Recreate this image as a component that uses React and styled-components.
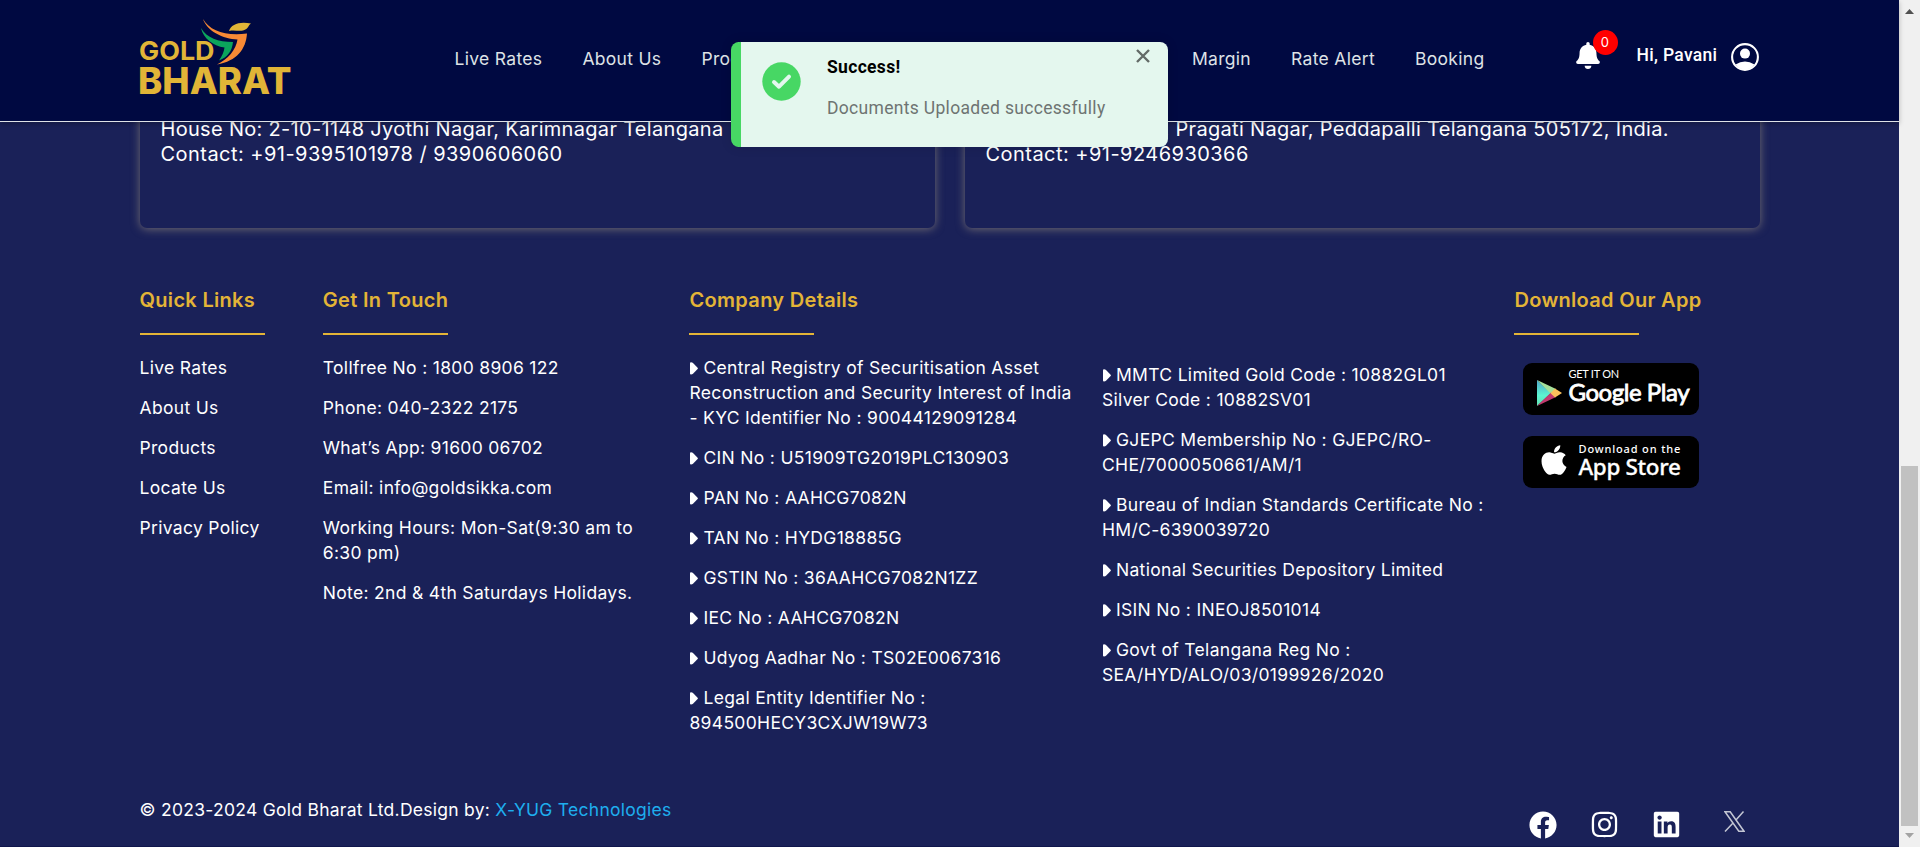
import React from "react";
import styled, { createGlobalStyle } from "styled-components";
import { FaFacebook, FaBell, FaApple } from "react-icons/fa";
import { FaInstagram, FaLinkedin } from "react-icons/fa6";

const Global = createGlobalStyle`
  *, *::before, *::after { box-sizing: border-box; }
  html, body { margin: 0; padding: 0; background: #1a2158; overflow: hidden; }
  body { font-family: Inter, "Liberation Sans", sans-serif; color: #fff; font-size: 17.5px; line-height: 25px; letter-spacing: 0.3125px; }
  p, h3, ul { margin: 0; padding: 0; }
  ul { list-style: none; }
  a { color: inherit; text-decoration: none; }
`;

const Shell = styled.div`
  display: flex;
  width: 1920px;
  height: 847px;
`;

const Page = styled.div`
  position: relative;
  flex: 1;
  display: flex;
  flex-direction: column;
  background: #1a2158;
  border-bottom: 1px solid #10164c;
`;

const Header = styled.header`
  position: relative;
  z-index: 2;
  flex: none;
  height: 122px;
  padding: 0 140.5px 0 139.5px;
  display: flex;
  align-items: flex-start;
  background: #000941;
  border-bottom: 1px solid #dee2e6;
  box-shadow: 0 2px 5px rgba(0, 0, 0, 0.25);
`;

const Logo = styled.svg`
  display: block;
  flex: none;
  width: 151px;
  height: 76px;
  margin: 18px 164px 0 0;
  letter-spacing: 0;
  overflow: visible;
`;

const Nav = styled.nav`
  display: flex;
  gap: 40px;
  width: 1030px;
  margin-top: 46px;
  color: #dee2e6;
`;

const NavLink = styled.a`
  white-space: nowrap;
  margin-left: ${(p) => (p.$push ? "auto" : "0")};
`;

const Account = styled.div`
  display: flex;
  margin-left: auto;
`;

const Bell = styled.div`
  position: relative;
  width: 24px;
  height: 27px;
  margin: 42px 37px 0 0;
  svg { display: block; width: 24px; height: 27px; }
`;

const Badge = styled.span`
  position: absolute;
  left: 17px;
  top: -12px;
  width: 25px;
  height: 25px;
  border-radius: 50%;
  background: #f00;
  font-size: 13px;
  line-height: 25px;
  text-align: center;
`;

const Greeting = styled.span`
  width: 80px;
  margin-top: 43px;
  font-family: Roboto, sans-serif;
  font-weight: 500;
  white-space: nowrap;
`;

const Avatar = styled.svg`
  display: block;
  width: 28px;
  height: 28px;
  margin: 43px 0 0 14px;
`;

const Toast = styled.div`
  position: absolute;
  z-index: 3;
  left: 731px;
  top: 42px;
  width: 437px;
  height: 105px;
  display: flex;
  background: #e4f7ee;
  border-left: 10px solid #47d764;
  border-radius: 8px;
  font-family: Roboto, sans-serif;
  box-shadow: 0 0 12px rgba(0, 0, 0, 0.12);
`;

const ToastIcon = styled.svg`
  display: block;
  width: 39px;
  height: 39px;
  margin: 20px 26.5px 0 20.5px;
`;

const ToastBody = styled.div`
  flex: 1;
  padding-top: 13px;
`;

const ToastTitle = styled.p`
  color: #000;
  font-size: 17.5px;
  font-weight: 700;
`;

const ToastText = styled.p`
  margin-top: 16px;
  color: #6e7472;
  font-size: 17.5px;
`;

const CloseIcon = styled.svg`
  display: block;
  width: 14px;
  height: 14px;
  margin: 7px 18px 0 0;
`;

const Offices = styled.section`
  flex: none;
  display: grid;
  grid-template-columns: 795px 795px;
  gap: 30px;
  padding: 0 139.5px;
  height: 106px;
`;

const Office = styled.article`
  margin-top: -22px;
  height: 128px;
  padding: 17px 21px 0;
  border-radius: 0 0 7px 7px;
  background: #1a2158;
  box-shadow: 0 1px 10px rgba(150, 140, 125, 0.7);
  font-size: 20px;
  line-height: 25px;
  white-space: nowrap;
`;

const Contact = styled.p`
  letter-spacing: 0.46px;
`;

const Footer = styled.footer`
  display: grid;
  grid-template-columns: 183.3px 366.7px 412.5px 412.5px 1fr;
  padding: 58px 109.5px 0 139.5px;
  height: 556px;
`;

const Column = styled.div`
  padding-right: 30px;
`;

const Heading = styled.h3`
  height: 47px;
  width: max-content;
  font-size: 20px;
  line-height: 28px;
  font-weight: 600;
  color: #e3b437;
`;

const Rule = styled.div`
  width: 125px;
  height: 2px;
  margin-left: ${(p) => p.$shift || 0}px;
  background: #e3b437;
`;

const Items = styled.ul`
  display: flex;
  flex-direction: column;
  gap: 15px;
  padding-top: ${(p) => p.$top || 20}px;
`;

const Item = styled.li`
  white-space: pre;
`;

const Caret = styled.svg`
  display: inline-block;
  width: 8px;
  height: 13px;
  margin: 0 5px 0 1px;
  vertical-align: -0.5px;
`;

const Stores = styled.div`
  display: flex;
  flex-direction: column;
  gap: 20.5px;
  padding: 28px 0 0 9px;
`;

const Store = styled.div`
  width: 176px;
  height: 52px;
  display: flex;
  border-radius: 9px;
  background: #000;
`;

const StoreIcon = styled.div`
  display: flex;
  width: ${(p) => p.$w}px;
  padding: ${(p) => p.$pad};
`;

const StoreText = styled.div`
  display: flex;
  flex-direction: column;
  white-space: nowrap;
`;

const StoreSmall = styled.span`
  font: ${(p) => p.$weight} ${(p) => p.$size}px/12px ${(p) => p.$family};
  letter-spacing: ${(p) => p.$spacing}px;
  margin-top: ${(p) => p.$top}px;
`;

const StoreBig = styled.span`
  font: ${(p) => p.$weight} ${(p) => p.$size}px/24px ${(p) => p.$family};
  letter-spacing: ${(p) => p.$spacing}px;
  -webkit-text-stroke: ${(p) => p.$stroke}px #fff;
`;

const Bottom = styled.div`
  display: flex;
  justify-content: space-between;
  padding: 13px 154px 0 139.5px;
`;

const Copyright = styled.p`
  letter-spacing: 0.27px;
`;

const Designer = styled.a`
  color: #1eaeee;
`;

const Socials = styled.div`
  display: flex;
  align-items: flex-start;
  padding-top: 13px;
`;

const Social = styled.a`
  display: flex;
  justify-content: center;
  width: ${(p) => p.$w || 28}px;
  margin-right: ${(p) => p.$gap || 0}px;
  padding-top: ${(p) => p.$top || 0}px;
  color: #fff;
  svg { display: block; flex: none; }
`;

const Scrollbar = styled.div`
  flex: none;
  width: 21px;
  display: flex;
  flex-direction: column;
  align-items: center;
  justify-content: space-between;
  padding: 9px 0 9px;
  background: #f0f0f0;
`;

const Thumb = styled.div`
  width: 17px;
  height: 360px;
  margin-top: auto;
  margin-bottom: 7px;
  background: #c1c1c1;
`;

const Arrow = styled.svg`
  display: block;
  width: 9px;
  height: 5px;
`;

const Bulleted = ({ children }) => (
  <Item>
    <Caret viewBox="0 0 8 13"><path d="M0 1.2Q0 .2 1 .2Q2.200 .2 3 1L7.6 5.700Q8.200 6.400 7.6 7.100L3 11.800Q2.200 12.600 1 12.600Q0 12.600 0 11.600Z" fill="#fff" /></Caret>
    {children}
  </Item>
);

const links = ["Live Rates", "About Us", "Products", "Locate Us", "Privacy Policy"];
const contacts = [
  "Tollfree No : 1800 8906 122",
  "Phone: 040-2322 2175",
  "What’s App: 91600 06702",
  "Email: info@goldsikka.com",
  "Working Hours: Mon-Sat(9:30 am to\n6:30 pm)",
  "Note: 2nd & 4th Saturdays Holidays.",
];
const company = [
  "Central Registry of Securitisation Asset\nReconstruction and Security Interest of India\n- KYC Identifier No : 90044129091284",
  "CIN No : U51909TG2019PLC130903",
  "PAN No : AAHCG7082N",
  "TAN No : HYDG18885G",
  "GSTIN No : 36AAHCG7082N1ZZ",
  "IEC No : AAHCG7082N",
  "Udyog Aadhar No : TS02E0067316",
  "Legal Entity Identifier No :\n894500HECY3CXJW19W73",
];
const registrations = [
  "MMTC Limited Gold Code : 10882GL01\nSilver Code : 10882SV01",
  "GJEPC Membership No : GJEPC/RO-\nCHE/7000050661/AM/1",
  "Bureau of Indian Standards Certificate No :\nHM/C-6390039720",
  "National Securities Depository Limited",
  "ISIN No : INEOJ8501014",
  "Govt of Telangana Reg No :\nSEA/HYD/ALO/03/0199926/2020",
];

export default function App() {
  return (
    <Shell>
      <Global />
      <Page>
        <Header>
          <Logo viewBox="0 0 151 76">
            <g fill="#e1b537" fontFamily="Inter, sans-serif" fontWeight="700">
              <text x="-1" y="42" fontSize="25.500" textLength="75.500" lengthAdjust="spacingAndGlyphs">GOLD</text>
              <text x="-2" y="76" fontSize="36.500" fontWeight="800" textLength="153.500" lengthAdjust="spacingAndGlyphs">BHARAT</text>
            </g>
            <path d="M63 1C70 13 85 18 107 15.500C106 31 97 43 77 46.500C88 41 96 32 97.500 21.500C83 21 67 13 63 1Z" fill="#f88a35" />
            <path d="M61 10C67 20 78 24 93 24C92 33 88 39 79 42.500C82 38 84 34 84.500 29.500C73 28 63 20 61 10Z" fill="#0ba45c" />
            <path d="M89 13C91 6 100 3 111 5.500C108 7 109 11 103 12.500C98 13.500 94 11.500 89 13Z" fill="#e1b537" />
          </Logo>
          <Nav>
            <NavLink>Live Rates</NavLink>
            <NavLink>About Us</NavLink>
            <NavLink>Products</NavLink>
            <NavLink $push>Margin</NavLink>
            <NavLink>Rate Alert</NavLink>
            <NavLink>Booking</NavLink>
          </Nav>
          <Account>
            <Bell><FaBell /><Badge>0</Badge></Bell>
            <Greeting>Hi, Pavani</Greeting>
            <Avatar viewBox="0 0 28 28">
              <circle cx="14" cy="14" r="12.900" fill="none" stroke="#fff" strokeWidth="2.100" />
              <circle cx="14" cy="10.600" r="5" fill="#fff" />
              <path d="M4.500 21.500Q14 15.500 23.500 21.500Q20 26.500 14 26.500T4.500 21.500Z" fill="#fff" />
            </Avatar>
          </Account>
        </Header>
        <Toast>
          <ToastIcon viewBox="0 0 39 39">
            <circle cx="19.500" cy="19.500" r="19.200" fill="#47d764" />
            <path d="M12 20L17 24.700L27 14.700" fill="none" stroke="#e4f7ee" strokeWidth="4" strokeLinecap="round" strokeLinejoin="round" />
          </ToastIcon>
          <ToastBody>
            <ToastTitle>Success!</ToastTitle>
            <ToastText>Documents Uploaded successfully</ToastText>
          </ToastBody>
          <CloseIcon viewBox="0 0 14 14"><path d="M1 1L13 13M13 1L1 13" stroke="#636b67" strokeWidth="2.400" /></CloseIcon>
        </Toast>
        <Offices>
          <Office>
            <p>House No: 2-10-1148 Jyothi Nagar, Karimnagar Telangana</p>
            <Contact>Contact: +91-9395101978 / 9390606060</Contact>
          </Office>
          <Office>
            <p>House No: 1-6-141, Pragati Nagar, Peddapalli Telangana 505172, India.</p>
            <Contact>Contact: +91-9246930366</Contact>
          </Office>
        </Offices>
        <Footer>
          <Column>
            <Heading>Quick Links</Heading>
            <Rule />
            <Items>{links.map((t) => <Item key={t}>{t}</Item>)}</Items>
          </Column>
          <Column>
            <Heading>Get In Touch</Heading>
            <Rule />
            <Items>{contacts.map((t) => <Item key={t}>{t}</Item>)}</Items>
          </Column>
          <Column>
            <Heading>Company Details</Heading>
            <Rule $shift={-0.5} />
            <Items>{company.map((t) => <Bulleted key={t}>{t}</Bulleted>)}</Items>
          </Column>
          <Column>
            <Items $top={76}>{registrations.map((t) => <Bulleted key={t}>{t}</Bulleted>)}</Items>
          </Column>
          <Column>
            <Heading>Download Our App</Heading>
            <Rule $shift={-0.5} />
            <Stores>
              <Store>
                <StoreIcon $w={45} $pad="17px 0 0 14px">
                  <svg width="25" height="26" viewBox="0 0 25 26">
                    <defs>
                      <linearGradient id="play" x1="0" y1="0" x2="0" y2="1">
                        <stop offset="0" stopColor="#4fa6c9" />
                        <stop offset=".6" stopColor="#5cf5d0" />
                        <stop offset="1" stopColor="#65dcae" />
                      </linearGradient>
                    </defs>
                    <path d="M0 0V26L14 13Z" fill="url(#play)" />
                    <path d="M0 0L19 9L14 14Z" fill="#a5e09a" />
                    <path d="M0 26L19 17L14 12.500Z" fill="#c2396f" />
                    <path d="M18 8.500L25 13L18 17.500L13.500 13.300Z" fill="#fcc15c" />
                  </svg>
                </StoreIcon>
                <StoreText>
                  <StoreSmall $family="Lato, sans-serif" $weight={400} $size={11} $spacing={-0.25} $top={5}>GET IT ON</StoreSmall>
                  <StoreBig $family="Lato, sans-serif" $weight={400} $size={24} $spacing={-0.45} $stroke={0.8}>Google Play</StoreBig>
                </StoreText>
              </Store>
              <Store>
                <StoreIcon $w={55} $pad="7px 0 0 14px"><FaApple size={34} /></StoreIcon>
                <StoreText>
                  <StoreSmall $family='"Noto Sans", sans-serif' $weight={500} $size={11} $spacing={0.85} $top={7}>Download on the</StoreSmall>
                  <StoreBig $family='"Noto Sans", sans-serif' $weight={500} $size={22.5} $spacing={-0.35} $stroke={0.3}>App Store</StoreBig>
                </StoreText>
              </Store>
            </Stores>
          </Column>
        </Footer>
        <Bottom>
          <Copyright>© 2023-2024 Gold Bharat Ltd.Design by: <Designer>X-YUG Technologies</Designer></Copyright>
          <Socials>
            <Social $w={28} $gap={34} $top={0.5}><FaFacebook size={28} /></Social>
            <Social $w={26} $gap={36}><FaInstagram size={29} /></Social>
            <Social $w={26} $gap={45}><FaLinkedin size={29} /></Social>
            <Social $w={21} $top={1}>
              <svg width="21" height="21" viewBox="0 0 21 21" fill="none" stroke="#c3c6d3" strokeWidth="1.500">
                <path d="M1 .8H6.200L20 20.200H14.800ZM19.500 .5L11.500 9.500M9.500 11.500L1 20.500" />
              </svg>
            </Social>
          </Socials>
        </Bottom>
      </Page>
      <Scrollbar>
        <Arrow viewBox="0 0 9 5"><path d="M4.500 0L9 5H0Z" fill="#505050" /></Arrow>
        <Thumb />
        <Arrow viewBox="0 0 9 5"><path d="M4.500 5L9 0H0Z" fill="#a3a3a3" /></Arrow>
      </Scrollbar>
    </Shell>
  );
}
